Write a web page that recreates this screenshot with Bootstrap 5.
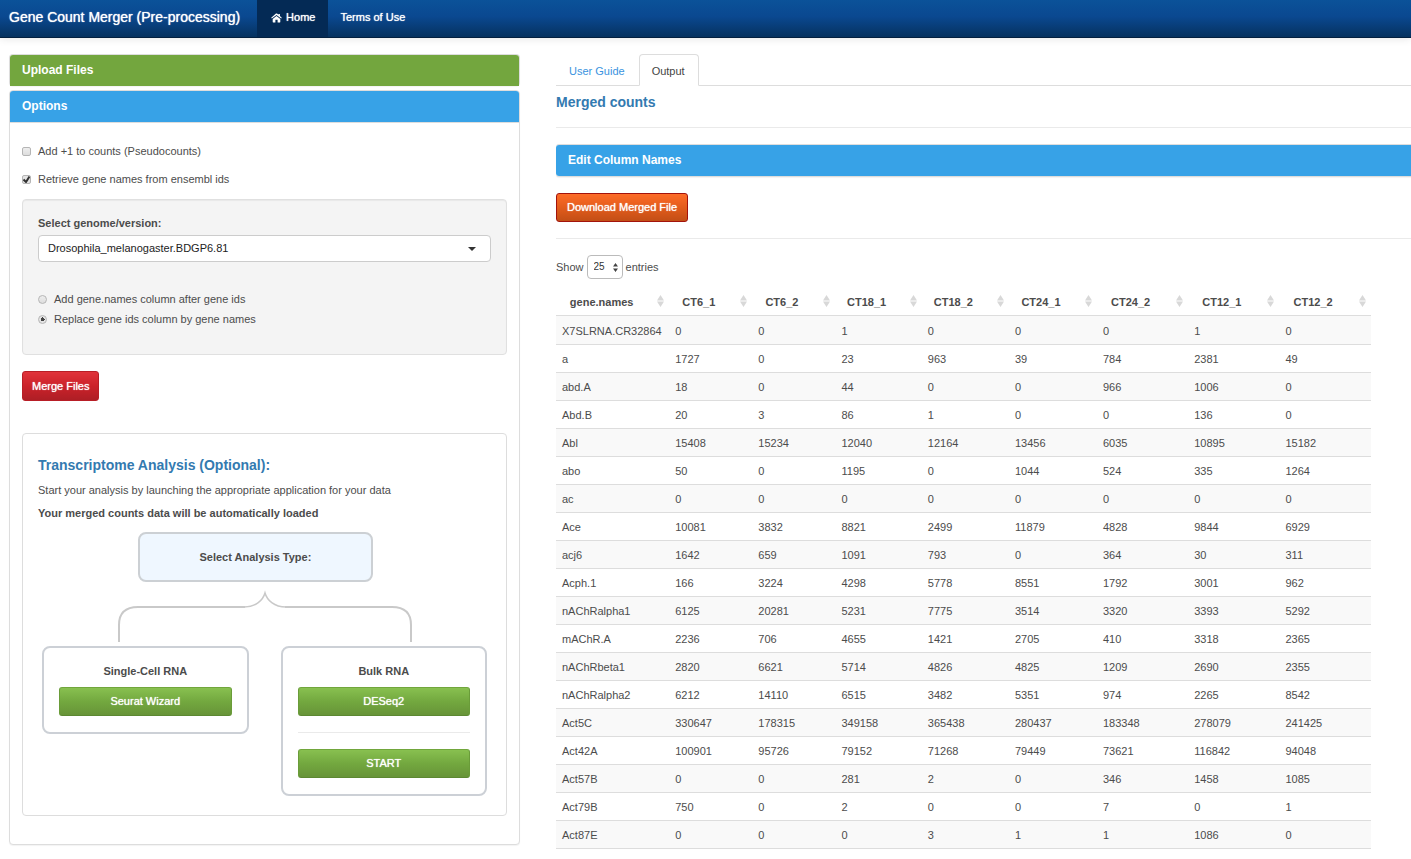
<!DOCTYPE html>
<html lang="en">
<head>
<meta charset="utf-8">
<meta name="viewport" content="width=device-width, initial-scale=1">
<title>Gene Count Merger (Pre-processing)</title>
<link rel="stylesheet" href="https://cdn.jsdelivr.net/npm/bootstrap@5.3.0/dist/css/bootstrap.min.css">
<style>
:root{--line:#ddd;--ink:#4c4c4c;--title:#337ab0}
body{font-family:"Liberation Sans",Arial,sans-serif;font-size:11px;line-height:16px;color:var(--ink)}
.page{height:100vh}
.topbar{min-height:38px;background:linear-gradient(#0b5299,#0a4890 45%,#06325f);border-bottom:1px solid #03203f;box-shadow:0 1px 8px rgba(0,0,0,.1);z-index:2;position:relative}
.topbar .navbar-brand,.topbar .navbar-brand:hover,.topbar .navbar-nav .nav-link,.topbar .navbar-nav .nav-link.active{color:#fff;text-shadow:0 0 1px #fff}
.topbar .navbar-brand{font-size:14px;line-height:20px;padding:7px 17px 0 9px}
.topbar .navbar-nav .nav-link{font-size:11px;line-height:16px;padding:9px 12px 12px}
.topbar .navbar-nav .nav-link.active{background:#042a55;padding-left:14px;padding-right:13px}
.layout{overflow:auto;scrollbar-width:none}
.layout::-webkit-scrollbar{display:none}
.columns{display:grid;grid-template-columns:minmax(0,511fr) minmax(0,855fr);column-gap:36px;padding:16px 0 14px 9px}
.panel{border:1px solid var(--line);border-radius:4px;background:#fff;box-shadow:0 1px 1px rgba(0,0,0,.05)}
.panel-title{font-size:12px;line-height:17px;font-weight:700;color:#fff;margin:0;padding:7px 12px;border-radius:3px 3px 0 0}
.green{background:#73a63e}.blue{background:#37a2e7}
.panel-body{padding:20px 12px 28px;border-top:1px solid var(--line)}
.tick{display:flex;align-items:center;gap:7px;min-height:16px;margin-bottom:12px}
.tick input{appearance:none;flex:none;width:9px;height:9px;margin:0;border:1px solid #b5b5b5;border-radius:2px;background:linear-gradient(#eee,#ddd)}
.tick input[type=radio]{border-radius:50%}
.tick input[type=checkbox]:checked{background:#e4e4e4 url("data:image/svg+xml,%3Csvg xmlns='http://www.w3.org/2000/svg' viewBox='0 0 9 9'%3E%3Cpath d='M1.5 4.5 4 7 7.5 1.5' fill='none' stroke='%23333' stroke-width='2'/%3E%3C/svg%3E") center/9px}
.tick input[type=radio]:checked{background:radial-gradient(circle,#444 0 2px,#e4e4e4 2px)}
.pit{background:#f4f4f4;border:1px solid #e0e0e0;border-radius:4px;padding:15px;box-shadow:inset 0 1px 1px rgba(0,0,0,.05)}
.modes{padding:29px 0 8px}
.pit .tick{margin-bottom:4px}
.genome{font-size:11px;line-height:16px;height:27px;padding:0 30px 2px 9px;color:#222;border-color:#ccc;border-radius:4px;background-image:url("data:image/svg+xml,%3Csvg xmlns='http://www.w3.org/2000/svg' viewBox='0 0 8 4'%3E%3Cpath d='M0 0h8L4 4z' fill='%23333'/%3E%3C/svg%3E");background-size:8px 4px;background-position:right 14px center}
.go{font-size:11px;line-height:16px;color:#fff;padding:5px 10px 6px;border-radius:3px;text-shadow:0 0 1px #fff}
.go:hover{color:#fff}
.go-red{background:linear-gradient(#e0333a,#cb222a 50%,#ae1e25);border-color:#b81e26;padding:6px 9px 6px 9px}
.go-orange{background:linear-gradient(#fd6b27,#e35c1c 50%,#c24e16);border-color:#a3130b}
.go-green{background:linear-gradient(#88c050,#73a83f 50%,#679438);border-color:#71a63c #6a9c39 #5c8832}
.h-blue{font-size:14px;line-height:17px;font-weight:700;color:var(--title);margin:0}
.inner{padding:23px 15px 19px;margin-top:16px}
.lead-in{margin-bottom:7px}
.note{margin-bottom:11px}
.choice{width:52%;margin-left:22%;height:50px;border:2px solid #ccd0d4;border-radius:8px;background:#eff7ff}
.branches{display:grid;grid-template-columns:1fr 1fr;gap:32px;padding:0 4px;align-items:start}
.branch{border:2px solid #ccd0d6;border-radius:8px;padding:15px 15px 16px}
.rule{border:0;border-top:1px solid #eaeaea;opacity:1;margin:16px 0}
.tabs{border-bottom:1px solid var(--line);font-size:11px}
.tabs .nav-link{padding:8px 13px 6px 12px;color:#3a93e0;line-height:16px;border-radius:4px 4px 0 0}
.tabs .nav-link.active{color:#444;border-color:var(--line) var(--line) #fff}
.wide,.wide .panel-title{border-right:0;border-left:0;border-radius:3px 0 0 3px}
.count{appearance:none;font-size:10px;height:24px;width:36px;padding:0 6px;color:#333;border:1px solid #bbb;border-radius:4px;background:#fff url("data:image/svg+xml,%3Csvg xmlns='http://www.w3.org/2000/svg' viewBox='0 0 5 9'%3E%3Cpath d='M0 3.5h5L2.5 0zM0 5.5h5L2.5 9z' fill='%23444'/%3E%3C/svg%3E") no-repeat right 4px center/5px 9px}
.length{gap:3px;margin-bottom:9px}
.counts{width:95.3%;table-layout:fixed;border-collapse:collapse;white-space:nowrap}
.counts td{padding:6px 0 5px 6px;border-top:1px solid var(--line);line-height:16px}
.counts tbody tr:first-child td{padding-top:7px}
.counts tbody tr:nth-child(odd){background:#f9f9f9}
.counts th{position:relative;text-align:center;padding:6px 30px 5px 6px;line-height:16px}
.counts th:first-child{padding-right:28px}
.counts th svg{position:absolute;right:5px;top:7px;width:7px;height:12px;fill:#d8d8d8}
</style>
</head>
<body>
<svg width="0" height="0" class="position-absolute" aria-hidden="true"><symbol id="sort" viewBox="0 0 7 12"><path d="M0 5.500h7L3.500 0zM0 6.500h7L3.500 12z"/></symbol></svg>
<div class="page d-flex flex-column">
<nav class="topbar navbar navbar-expand p-0 align-items-stretch flex-shrink-0">
  <a class="navbar-brand m-0" href="#">Gene Count Merger (Pre-processing)</a>
  <ul class="navbar-nav">
    <li class="nav-item"><a class="nav-link active" href="#"><svg width="11" height="10" viewBox="0 0 11 10" fill="#fff" class="me-1" aria-hidden="true"><path d="M5.500 3 9.300 6V9q0 .4-.4.4H6.600V6.800H4.400v2.600H2.100q-.4 0-.4-.4V6zM5 .6q.5-.4 1 0l1.500 1.200V.9h1.400v2.200l1.900 1.600-.6.8L5.500 1.900.8 5.500.2 4.700z"/></svg>Home</a></li>
    <li class="nav-item"><a class="nav-link" href="#">Terms of Use</a></li>
  </ul>
</nav>
<main class="layout flex-fill">
<div class="columns">
  <section>
    <div class="panel border-bottom-0 mb-1"><h2 class="panel-title green">Upload Files</h2></div>
    <div class="panel">
      <h2 class="panel-title blue">Options</h2>
      <div class="panel-body">
        <div class="tick"><input type="checkbox" id="pseudo"><label for="pseudo">Add +1 to counts (Pseudocounts)</label></div>
        <div class="tick"><input type="checkbox" id="names" checked><label for="names">Retrieve gene names from ensembl ids</label></div>
        <div class="pit mb-3">
          <label for="genome" class="fw-bold d-block mb-1">Select genome/version:</label>
          <select id="genome" class="form-select genome"><option>Drosophila_melanogaster.BDGP6.81</option></select>
          <div class="modes">
            <div class="tick"><input type="radio" name="mode" id="add"><label for="add">Add gene.names column after gene ids</label></div>
            <div class="tick"><input type="radio" name="mode" id="rep" checked><label for="rep">Replace gene ids column by gene names</label></div>
          </div>
        </div>
        <button type="button" class="btn go go-red mb-3">Merge Files</button>
        <div class="panel inner shadow-none">
          <h3 class="h-blue mb-2">Transcriptome Analysis (Optional):</h3>
          <p class="lead-in">Start your analysis by launching the appropriate application for your data</p>
          <p class="note fw-bold">Your merged counts data will be automatically loaded</p>
          <div class="choice d-flex align-items-center justify-content-center fw-bold">Select Analysis Type:</div>
          <svg class="d-block mx-auto mt-2 mb-1" width="294" height="52" viewBox="0 -2 294 52" fill="none" stroke="#c9c9c9" aria-hidden="true"><path stroke-width="2" d="M1 50V33Q1 15 20 15H127M167 15H274Q293 15 293 33V50"/><path stroke-width="1.500" d="M126 15C138 15 145 8 147 1C149 8 156 15 168 15"/></svg>
          <div class="branches">
            <div class="branch"><div class="text-center fw-bold mb-2">Single-Cell RNA</div><button type="button" class="btn go go-green w-100">Seurat Wizard</button></div>
            <div class="branch"><div class="text-center fw-bold mb-2">Bulk RNA</div><button type="button" class="btn go go-green w-100">DESeq2</button><hr class="rule"><button type="button" class="btn go go-green w-100">START</button></div>
          </div>
        </div>
      </div>
    </div>
  </section>
  <section>
    <ul class="nav nav-tabs tabs">
      <li class="nav-item"><a class="nav-link" href="#">User Guide</a></li>
      <li class="nav-item"><a class="nav-link active" href="#">Output</a></li>
    </ul>
    <h3 class="h-blue mt-2">Merged counts</h3>
    <hr class="rule">
    <div class="panel wide mb-3"><h2 class="panel-title blue">Edit Column Names</h2></div>
    <button type="button" class="btn go go-orange">Download Merged File</button>
    <hr class="rule">
    <div class="length d-flex align-items-center"><label for="count">Show</label><select id="count" class="count" aria-label="entries"><option>25</option></select><span>entries</span></div>
    <table class="counts">
      <colgroup><col style="width:13.9%"><col style="width:10.2%"><col style="width:10.2%"><col style="width:10.6%"><col style="width:10.7%"><col style="width:10.8%"><col style="width:11.2%"><col style="width:11.2%"><col style="width:11.2%"></colgroup>
      <thead><tr><th>gene.names<svg><use href="#sort"/></svg></th><th>CT6_1<svg><use href="#sort"/></svg></th><th>CT6_2<svg><use href="#sort"/></svg></th><th>CT18_1<svg><use href="#sort"/></svg></th><th>CT18_2<svg><use href="#sort"/></svg></th><th>CT24_1<svg><use href="#sort"/></svg></th><th>CT24_2<svg><use href="#sort"/></svg></th><th>CT12_1<svg><use href="#sort"/></svg></th><th>CT12_2<svg><use href="#sort"/></svg></th></tr></thead>
      <tbody>
      <tr><td>X7SLRNA.CR32864</td><td>0</td><td>0</td><td>1</td><td>0</td><td>0</td><td>0</td><td>1</td><td>0</td></tr>
      <tr><td>a</td><td>1727</td><td>0</td><td>23</td><td>963</td><td>39</td><td>784</td><td>2381</td><td>49</td></tr>
      <tr><td>abd.A</td><td>18</td><td>0</td><td>44</td><td>0</td><td>0</td><td>966</td><td>1006</td><td>0</td></tr>
      <tr><td>Abd.B</td><td>20</td><td>3</td><td>86</td><td>1</td><td>0</td><td>0</td><td>136</td><td>0</td></tr>
      <tr><td>Abl</td><td>15408</td><td>15234</td><td>12040</td><td>12164</td><td>13456</td><td>6035</td><td>10895</td><td>15182</td></tr>
      <tr><td>abo</td><td>50</td><td>0</td><td>1195</td><td>0</td><td>1044</td><td>524</td><td>335</td><td>1264</td></tr>
      <tr><td>ac</td><td>0</td><td>0</td><td>0</td><td>0</td><td>0</td><td>0</td><td>0</td><td>0</td></tr>
      <tr><td>Ace</td><td>10081</td><td>3832</td><td>8821</td><td>2499</td><td>11879</td><td>4828</td><td>9844</td><td>6929</td></tr>
      <tr><td>acj6</td><td>1642</td><td>659</td><td>1091</td><td>793</td><td>0</td><td>364</td><td>30</td><td>311</td></tr>
      <tr><td>Acph.1</td><td>166</td><td>3224</td><td>4298</td><td>5778</td><td>8551</td><td>1792</td><td>3001</td><td>962</td></tr>
      <tr><td>nAChRalpha1</td><td>6125</td><td>20281</td><td>5231</td><td>7775</td><td>3514</td><td>3320</td><td>3393</td><td>5292</td></tr>
      <tr><td>mAChR.A</td><td>2236</td><td>706</td><td>4655</td><td>1421</td><td>2705</td><td>410</td><td>3318</td><td>2365</td></tr>
      <tr><td>nAChRbeta1</td><td>2820</td><td>6621</td><td>5714</td><td>4826</td><td>4825</td><td>1209</td><td>2690</td><td>2355</td></tr>
      <tr><td>nAChRalpha2</td><td>6212</td><td>14110</td><td>6515</td><td>3482</td><td>5351</td><td>974</td><td>2265</td><td>8542</td></tr>
      <tr><td>Act5C</td><td>330647</td><td>178315</td><td>349158</td><td>365438</td><td>280437</td><td>183348</td><td>278079</td><td>241425</td></tr>
      <tr><td>Act42A</td><td>100901</td><td>95726</td><td>79152</td><td>71268</td><td>79449</td><td>73621</td><td>116842</td><td>94048</td></tr>
      <tr><td>Act57B</td><td>0</td><td>0</td><td>281</td><td>2</td><td>0</td><td>346</td><td>1458</td><td>1085</td></tr>
      <tr><td>Act79B</td><td>750</td><td>0</td><td>2</td><td>0</td><td>0</td><td>7</td><td>0</td><td>1</td></tr>
      <tr><td>Act87E</td><td>0</td><td>0</td><td>0</td><td>3</td><td>1</td><td>1</td><td>1086</td><td>0</td></tr>
      <tr><td>Act88F</td><td>333</td><td>0</td><td>0</td><td>0</td><td>0</td><td>0</td><td>45</td><td>1</td></tr>
      </tbody>
    </table>
  </section>
</div>
</main>
</div>
<script src="https://cdn.jsdelivr.net/npm/bootstrap@5.3.0/dist/js/bootstrap.bundle.min.js"></script>
</body>
</html>
